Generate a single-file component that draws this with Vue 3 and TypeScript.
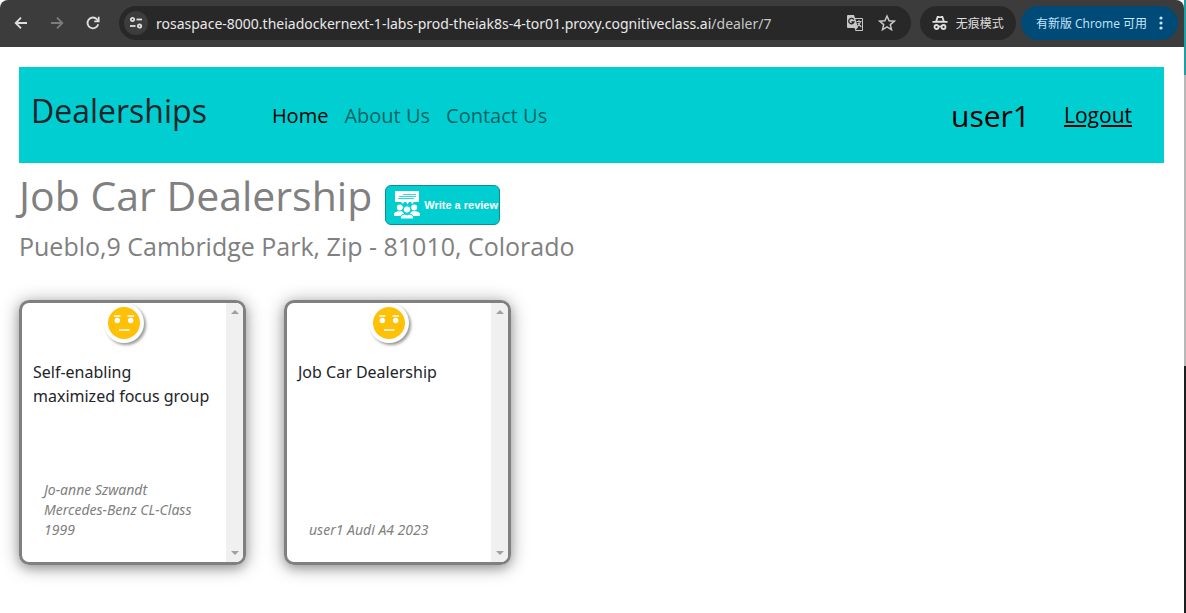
<script setup lang="ts">
interface Review {
  id: number
  text: string
  reviewer: string
}

const address = {
  host: 'rosaspace-8000.theiadockernext-1-labs-prod-theiak8s-4-tor01.proxy.cognitiveclass.ai',
  path: '/dealer/7',
}

const links = [
  { label: 'Home', active: true },
  { label: 'About Us', active: false },
  { label: 'Contact Us', active: false },
]

const reviews: Review[] = [
  { id: 1, text: 'Self-enabling maximized focus group', reviewer: 'Jo-anne Szwandt Mercedes-Benz CL-Class 1999' },
  { id: 2, text: 'Job Car Dealership', reviewer: 'user1 Audi A4 2023' },
]
</script>

<template>
  <div class="screen">
    <div class="window">
      <header class="toolbar">
        <div class="tools">
          <button type="button" aria-label="Back">
            <svg viewBox="0 0 16 16" width="16" height="16"><path d="M14 8H3M8 2.700 2.700 8 8 13.300" /></svg>
          </button>
          <button class="dim" type="button" aria-label="Forward">
            <svg viewBox="0 0 16 16" width="16" height="16"><path d="M2 8h11M8 2.700 13.300 8 8 13.300" /></svg>
          </button>
          <button type="button" aria-label="Reload">
            <svg viewBox="0 0 16 16" width="16" height="16"><path d="M13.200 9.200A5.400 5.400 0 1 1 12 4.300L13.600 6M13.700 1.800V6.300H9.200" /></svg>
          </button>
        </div>
        <div class="omnibox">
          <button class="site" type="button" aria-label="Site information">
            <svg viewBox="0 0 14 14" width="14" height="14">
              <circle cx="3.500" cy="3.500" r="1.700" /><path d="M7.500 3.500H13" />
              <circle cx="10.500" cy="10" r="1.700" /><path d="M1 10h5.500" />
            </svg>
          </button>
          <span class="url">{{ address.host }}<span class="path">{{ address.path }}</span></span>
          <button class="small" type="button" aria-label="Translate">
            <svg viewBox="0 0 18 18" width="18" height="18">
              <path class="fill" d="M2 1h6l1 3h7a1 1 0 0 1 1 1v11a1 1 0 0 1-1 1H9.500l-1-3H2a1 1 0 0 1-1-1V2a1 1 0 0 1 1-1z" />
              <path class="cut" d="M9.400 5 12 13.500 9.600 16H16V5z" />
              <path class="thin-dark" d="M7.800 5.700A2.700 2.700 0 1 0 8 8H5.500" />
              <path class="thin" d="M10.500 7.500H15.500M13 6.300v1.200M14.500 7.500C14 10 12.800 11.400 11.300 12.500M11.800 9l3.500 4" />
            </svg>
          </button>
          <button class="small" type="button" aria-label="Bookmark this page">
            <svg viewBox="0 0 18 18" width="18" height="18"><path class="star" d="m9 2 2.100 4.700 5.100.500-3.900 3.400 1.200 5L9 12.900l-4.500 2.700 1.200-5-3.900-3.400 5.100-.500z" /></svg>
          </button>
        </div>
        <button class="pill incognito" type="button">
          <svg viewBox="0 0 16 16" width="16" height="16">
            <path class="fill" d="M5 1h1.600L8 1.500 9.400 1H11l1.700 5H15.500v1.800H.5V6h2.800z" />
            <circle cx="4.500" cy="12" r="2" /><circle cx="11.500" cy="12" r="2" /><path d="M6.500 11.500h3" />
            <path class="hat" d="M5.300 5.800 6.200 3h3.600l.9 2.800z" />
          </svg>
          <span>无痕模式</span>
        </button>
        <button class="pill update" type="button">
          <span>有新版 Chrome 可用</span>
          <svg viewBox="0 0 4 16" width="4" height="16"><g class="fill"><circle cx="2" cy="3" r="1.600" /><circle cx="2" cy="8" r="1.600" /><circle cx="2" cy="13" r="1.600" /></g></svg>
        </button>
      </header>

      <div class="page">
        <nav class="navbar" aria-label="Main">
          <span class="brand">Dealerships</span>
          <div class="links">
            <a v-for="link in links" :key="link.label" href="#" :class="{ active: link.active }">{{ link.label }}</a>
          </div>
          <span class="user">user1</span>
          <a class="logout" href="#">Logout</a>
        </nav>

        <main>
          <div class="title-row">
            <h1>Job Car Dealership</h1>
            <a class="write" href="#">
              <svg viewBox="0 0 26 28" width="26" height="28" aria-hidden="true">
                <path d="M1 0h24v11H1z" />
                <path class="line" d="M9 3.500h13M5 5.500h17M4 7.500h16" />
                <path d="M7 11h3l-1 2zM12 11h3l-1.500 2.500zM17 11h3l-2 2z" />
                <circle cx="5.800" cy="16.500" r="3" /><circle cx="20.200" cy="16.500" r="3" />
                <path d="M0 24v-1.500Q1 20.500 4 20.300h4l2 2.200L8 25H0zM26 24v-1.500q-1-2-4-2.200h-4l-2 2.200 2 2.500h8z" />
                <circle class="ring" cx="13" cy="18.500" r="3.700" />
                <path class="ring" d="M6.500 28v-2q1-3 4.500-3l2 1 2-1q3.500 0 4.500 3v2z" />
              </svg>
              <span>Write a review</span>
            </a>
          </div>
          <h2>Pueblo,9 Cambridge Park, Zip - 81010, Colorado</h2>

          <section class="reviews" aria-label="Reviews">
            <article v-for="review in reviews" :key="review.id" class="card">
              <div class="content">
                <svg class="face" viewBox="0 0 40 40" width="40" height="40" role="img" aria-label="Neutral">
                  <circle cx="20" cy="20" r="16" fill="#ffc107" />
                  <g fill="#fff"><circle cx="13.300" cy="17.500" r="2.700" /><circle cx="26.700" cy="17.500" r="2.700" /></g>
                  <path d="M10 13h6.500M23.500 13H30M15 27h10.500" stroke="#fff" stroke-width="1.600" />
                </svg>
                <p class="text">{{ review.text }}</p>
                <p class="reviewer">{{ review.reviewer }}</p>
              </div>
              <div class="scrollbar" aria-hidden="true">
                <svg viewBox="0 0 8 4" width="8" height="4"><path d="M0 4 4 0l4 4z" /></svg>
                <svg viewBox="0 0 8 4" width="8" height="4"><path d="M0 0h8L4 4z" /></svg>
              </div>
            </article>
          </section>
        </main>
      </div>
    </div>
    <div class="edge" aria-hidden="true"></div>
  </div>
</template>

<style>
body {
  margin: 0;
  background: #fff;
}
</style>

<style scoped>
* {
  box-sizing: border-box;
}

.screen {
  display: flex;
  min-height: 100vh;
  font-family: "Open Sans", "Noto Sans", "Noto Sans CJK SC", sans-serif;
  color: #212529;
}

.window {
  flex: 1;
  min-width: 0;
}

.edge {
  width: 2px;
  background: linear-gradient(#1f9ea3 0 75px, #b8b8b8 75px 366px, #1c1e20 366px);
}

button {
  border: 0;
  padding: 0;
  background: none;
  font: inherit;
  color: inherit;
}

.toolbar {
  display: flex;
  align-items: center;
  height: 47px;
  padding: 0 6px 1px 13px;
  background: #3c3c3c;
  border-radius: 8px 8px 0 0;
  color: #dedede;
}

.toolbar svg {
  display: block;
  fill: none;
  stroke: currentColor;
  stroke-width: 1.8;
}

.toolbar .fill {
  fill: currentColor;
  stroke: none;
}

.tools {
  display: flex;
  gap: 20px;
  margin-right: 18px;
}

.dim {
  color: #7c7c7c;
}

.omnibox {
  flex: 1;
  min-width: 0;
  display: flex;
  align-items: center;
  height: 34px;
  margin-right: 9px;
  padding: 0 15px 0 5px;
  border-radius: 17px;
  background: #282828;
}

.site {
  display: grid;
  place-items: center;
  width: 24px;
  height: 24px;
  margin-right: 8px;
  border-radius: 50%;
  background: #3c3c3c;
}

.url {
  flex: 1;
  min-width: 0;
  overflow: hidden;
  white-space: nowrap;
  font-family: "Noto Sans", "Open Sans", sans-serif;
  font-size: 14px;
  color: #e8e8e8;
}

.path {
  color: #c7c7c7;
}

.small {
  margin-left: 14px;
  color: #c7c7c7;
}

.toolbar .cut {
  fill: #282828;
  stroke: none;
}

.toolbar .thin {
  stroke-width: 1.2;
}

.toolbar .thin-dark {
  stroke: #282828;
  stroke-width: 1.3;
}

.toolbar .star {
  stroke-width: 1.5;
}

.toolbar .hat {
  fill: #282828;
  stroke: none;
}

.pill {
  display: flex;
  align-items: center;
  height: 34px;
  border-radius: 17px;
  font-size: 12px;
  white-space: nowrap;
}

.incognito {
  gap: 8px;
  margin-right: 5px;
  padding: 0 12px;
  background: #282828;
}

.update {
  gap: 12px;
  padding: 0 15px;
  background: #004a77;
  color: #c2e7ff;
}

.page {
  padding: 20px 20px 40px 19px;
}

.navbar {
  display: flex;
  align-items: center;
  height: 96px;
  padding: 0 32px 0 12px;
  background: #00ced1;
}

.brand {
  margin: 0 65px 10px 0;
  font-size: 32px;
}

.links {
  flex: 1;
  display: flex;
  gap: 16px;
  font-size: 20px;
}

.links a {
  color: rgba(0, 0, 0, 0.55);
  text-decoration: none;
}

.links .active {
  color: #000;
}

.user {
  margin-right: 34px;
  font-size: 30px;
  color: #000;
}

.logout {
  font-size: 21px;
  color: #000;
}

.title-row {
  display: flex;
  align-items: center;
  gap: 13px;
  height: 66px;
}

h1,
h2,
p {
  margin: 0;
  font-weight: 400;
}

h1 {
  padding-bottom: 2px;
  font-size: 41px;
  line-height: 64px;
  color: #808080;
  white-space: nowrap;
}

.write {
  display: flex;
  align-items: center;
  gap: 4px;
  height: 40px;
  margin-top: 18px;
  padding: 0 1px 0 8px;
  border: 1px solid #0a8f92;
  border-radius: 6px;
  background: #00ced1;
  color: #fff;
  font: bold 11px "Liberation Sans", Arial, sans-serif;
  text-decoration: none;
  white-space: nowrap;
}

.write svg {
  fill: #fff;
}

.write .line,
.write .ring {
  stroke: #00ced1;
}

.write .line {
  stroke-width: 0.8;
}

h2 {
  font-size: 25px;
  line-height: 35px;
  color: #808080;
}

.reviews {
  display: flex;
  flex-wrap: wrap;
  gap: 38px;
  margin-top: 36px;
}

.card {
  display: flex;
  width: 227px;
  height: 265px;
  border: 3px solid #808080;
  border-radius: 10px;
  overflow: hidden;
  box-shadow: 0 4px 8px rgba(0, 0, 0, 0.15), 0 2px 18px rgba(0, 0, 0, 0.38);
}

.content {
  flex: 1;
  min-width: 0;
  display: flex;
  flex-direction: column;
  padding-bottom: 22px;
  font-family: "Noto Sans", "Open Sans", sans-serif;
}

.face {
  flex: none;
  align-self: center;
  border-radius: 50%;
  box-shadow: 2px 2px 3px rgba(0, 0, 0, 0.4);
}

.text {
  padding: 17px 12px 0 11px;
  font-size: 16px;
  line-height: 24px;
}

.reviewer {
  margin-top: auto;
  padding: 0 20px 0 22px;
  font-size: 14px;
  line-height: 20px;
  font-style: italic;
  color: #808080;
}

.scrollbar {
  display: flex;
  flex-direction: column;
  justify-content: space-between;
  align-items: center;
  width: 17px;
  padding: 7px 0;
  background: #f0f0f0;
  fill: #a0a0a0;
}
</style>
